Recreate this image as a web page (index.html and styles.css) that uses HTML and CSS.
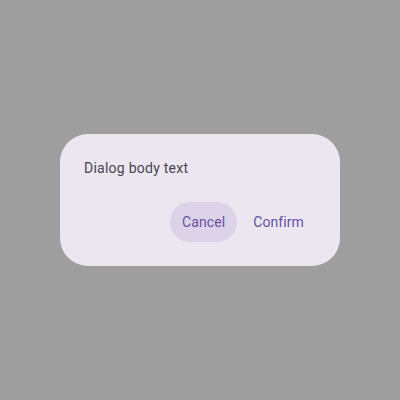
FILE: index.html
```html
<!DOCTYPE html>
<html>
<head>
<meta charset="utf-8">
<link rel="stylesheet" href="styles.css">
</head>
<body>
<div class="scrim">
  <div class="dialog">
    <div class="body-text">Dialog body text</div>
    <div class="actions">
      <button class="btn btn-focused">Cancel</button>
      <button class="btn">Confirm</button>
    </div>
  </div>
</div>
</body>
</html>
```
FILE: styles.css
```css
html, body {
  margin: 0;
  padding: 0;
}
body {
  background: #9e9e9e;
  font-family: Roboto, "Noto Sans", sans-serif;
}
.scrim {
  width: 400px;
  height: 400px;
  display: flex;
  align-items: center;
  justify-content: center;
}
.dialog {
  width: 280px;
  box-sizing: border-box;
  padding: 24px;
  background: #ece6f0;
  border-radius: 28px;
  display: flex;
  flex-direction: column;
  gap: 24px;
}
.body-text {
  font-size: 14px;
  line-height: 20px;
  letter-spacing: 0.25px;
  color: #49454f;
}
.actions {
  display: flex;
  justify-content: flex-end;
  gap: 4px;
}
.btn {
  height: 40px;
  padding: 0 12px;
  border: none;
  border-radius: 20px;
  background: transparent;
  font-family: Roboto, "Noto Sans", sans-serif;
  font-size: 14px;
  font-weight: 400;
  letter-spacing: 0.1px;
  color: #6750a4;
}
.btn-focused {
  background: #dcd3e8;
}
```
